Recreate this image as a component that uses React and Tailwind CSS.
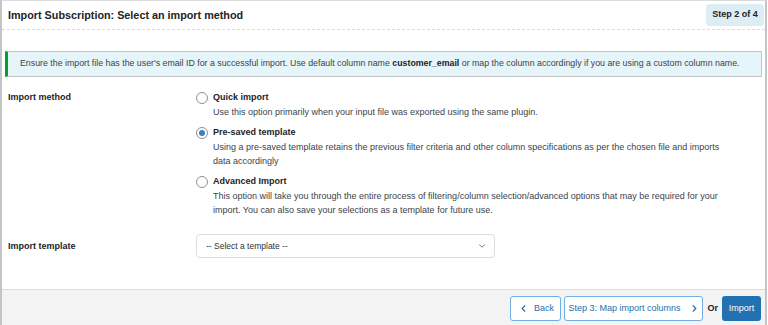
import { ChevronDown, ChevronLeft, ChevronRight } from 'lucide-react';

const options = [
    {
        id: 'quick',
        title: 'Quick import',
        desc: 'Use this option primarily when your input file was exported using the same plugin.',
    },
    {
        id: 'template',
        title: 'Pre-saved template',
        desc: 'Using a pre-saved template retains the previous filter criteria and other column specifications as per the chosen file and imports data accordingly',
    },
    {
        id: 'advanced',
        title: 'Advanced Import',
        desc: 'This option will take you through the entire process of filtering/column selection/advanced options that may be required for your import. You can also save your selections as a template for future use.',
    },
];

function Radio({ checked }) {
    return (
        <span className="mt-[2px] flex h-[12px] w-[12px] flex-shrink-0 items-center justify-center rounded-full border border-[#8c8f94] bg-white">
            {checked && <span className="h-[6px] w-[6px] rounded-full bg-[#3582c4]" />}
        </span>
    );
}

export default function App() {
    const selected = 'template';

    return (
        <div className="h-[325px] w-[768px] overflow-hidden bg-white font-['Liberation_Sans',Arial,sans-serif] text-[#3c434a]">
            <div className="flex h-full w-[767px] flex-col border-x-2 border-t border-[#dcdcde] border-r-[#c3c4c7] border-l-[#c3c4c7]">
                {/* Header */}
                <div className="flex h-[29px] items-center justify-between border-b border-dashed border-[#dcdcde] pl-[6px] pr-[1px]">
                    <h2 className="text-[10.8px] font-bold text-[#1d2327]">
                        Import Subscription: Select an import method
                    </h2>
                    <span className="flex h-[22px] w-[58px] items-center justify-center rounded-[4px] bg-[#dcedf4] text-[9px] font-bold text-[#1d2327]">
                        Step 2 of 4
                    </span>
                </div>

                {/* Notice */}
                <div className="mx-[3px] mt-[21px] flex h-[26px] items-center border border-[#c3c4c7] border-l-[3px] border-l-[#00a32a] bg-[#e5f5fa] pl-[12px] text-[8.8px] text-[#3c434a]">
                    <p className="whitespace-nowrap">
                        Ensure the import file has the user's email ID for a successful import. Use default column name{' '}
                        <b className="font-bold text-[#1d2327]">customer_email</b> or map the column accordingly if you are using a custom column name.
                    </p>
                </div>

                {/* Form */}
                <div className="grid grid-cols-[188px_1fr] pl-[6px] pr-[35px] pt-[13px] text-[9px]">
                    <div className="pt-[1px] font-bold text-[#1d2327]">Import method</div>
                    <div className="flex flex-col gap-[6px]">
                        {options.map((o) => (
                            <label key={o.id} className="flex gap-[5px]">
                                <Radio checked={o.id === selected} />
                                <div>
                                    <div className="leading-[15px] font-bold text-[#1d2327]">{o.title}</div>
                                    <div className="leading-[14px]">{o.desc}</div>
                                </div>
                            </label>
                        ))}
                    </div>

                    <div className="pt-[17px] font-bold leading-[24px] text-[#1d2327]">Import template</div>
                    <div className="pt-[17px]">
                        <div className="flex h-[24px] w-[299px] items-center justify-between rounded-[4px] border border-[#dcdcde] pl-[9px] pr-[7px] text-[8.5px] text-[#2c3338]">
                            <span>-- Select a template --</span>
                            <ChevronDown className="h-[10px] w-[10px] text-[#50575e]" strokeWidth={2} />
                        </div>
                    </div>
                </div>

                <div className="flex-1" />

                {/* Footer */}
                <div className="flex h-[36px] items-start justify-end gap-[3px] border-t border-[#dcdcde] bg-[#f3f3f4] pr-[4px] pt-[6px] text-[9px]">
                    <button className="flex h-[25px] w-[51px] items-center justify-center gap-[5px] rounded-[3px] border border-[#72aee6] bg-white text-[#2271b1]">
                        <ChevronLeft className="h-[11px] w-[11px]" strokeWidth={2.5} />
                        Back
                    </button>
                    <button className="flex h-[25px] w-[139px] items-center justify-center gap-[8px] rounded-[3px] border border-[#72aee6] bg-white text-[#2271b1]">
                        Step 3: Map import columns
                        <ChevronRight className="h-[11px] w-[11px]" strokeWidth={2.5} />
                    </button>
                    <span className="flex h-[25px] items-center px-[1px] font-bold text-[#1d2327]">Or</span>
                    <button className="flex h-[25px] w-[39px] items-center justify-center rounded-[3px] bg-[#2271b1] text-white">
                        Import
                    </button>
                </div>
            </div>
        </div>
    );
}
